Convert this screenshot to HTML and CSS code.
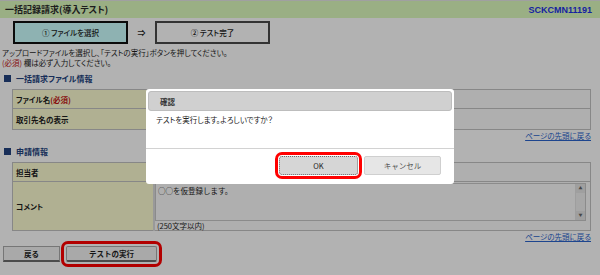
FILE: index.html
```html
<!DOCTYPE html>
<html lang="ja">
<head>
    <meta charset="UTF-8">
    <title>一括記録請求(導入テスト)</title>
    <link rel="stylesheet" href="styles.css">
</head>
<body>
    <div class="page">
        <!-- Title bar -->
        <div class="titlebar">
            <h1>一括記録請求(導入テスト)</h1>
            <span class="screen-id">SCKCMN11191</span>
        </div>

        <!-- Steps -->
        <div class="steps">
            <div class="step current">① ファイルを選択</div>
            <span class="arrow">⇒</span>
            <div class="step">② テスト完了</div>
        </div>

        <p class="guide">
            アップロードファイルを選択し、「テストの実行」ボタンを押してください。<br>
            <span class="req">(必須)</span> 欄は必ず入力してください。
        </p>

        <h2 class="section">一括請求ファイル情報</h2>
        <table class="form-table">
            <tr class="row-file">
                <th>ファイル名<span class="req">(必須)</span></th>
                <td></td>
            </tr>
            <tr class="row-name">
                <th>取引先名の表示</th>
                <td></td>
            </tr>
        </table>
        <div class="to-top"><a href="#">ページの先頭に戻る</a></div>

        <h2 class="section">申請情報</h2>
        <table class="form-table">
            <tr class="row-user">
                <th>担当者</th>
                <td></td>
            </tr>
            <tr class="row-comment">
                <th>コメント</th>
                <td>
                    <div class="comment-box">
                        <textarea class="comment">○○を仮登録します。</textarea>
                        <div class="scrollbar">
                            <span class="scroll-arrow">▲</span>
                            <span class="scroll-arrow">▼</span>
                        </div>
                    </div>
                    <div class="note">(250文字以内)</div>
                </td>
            </tr>
        </table>
        <div class="to-top"><a href="#">ページの先頭に戻る</a></div>

        <div class="actions">
            <button class="btn back">戻る</button>
            <button class="btn run">テストの実行</button>
        </div>
    </div>

    <!-- Confirm dialog -->
    <div class="overlay"></div>
    <div class="dialog">
        <div class="dialog-title">確認</div>
        <div class="dialog-body">テストを実行します。よろしいですか？</div>
        <div class="dialog-buttons">
            <button class="dlg-btn ok">OK</button>
            <button class="dlg-btn cancel">キャンセル</button>
        </div>
    </div>
</body>
</html>
```

FILE: styles.css
```css
body {
    margin: 0;
    font-family: "Noto Sans CJK JP", sans-serif;
    font-size: 7.5px;
    font-feature-settings: "palt";
    color: #1e1e1e;
    background-color: #fff;
}
.page {
    width: 600px;
    height: 275px;
    overflow: hidden;
}

/* Title bar */
.titlebar {
    display: flex;
    justify-content: space-between;
    align-items: center;
    height: 17px;
    border-top: 1px solid #e6e6e6;
    padding: 0 8px 0 5px;
    background-color: #ddfbbd;
}
h1 {
    margin: 0;
    font-size: 9px;
    font-weight: bold;
    color: #2a2a2a;
}
.screen-id {
    font-family: "Liberation Sans", Arial, sans-serif;
    font-size: 9px;
    font-weight: bold;
    color: #1f32e6;
}

/* Steps */
.steps {
    display: flex;
    align-items: center;
    margin: 3px 0 0 13px;
}
.step {
    width: 111px;
    height: 19px;
    border: 2px solid #4a4a4a;
    background-color: #fff;
    display: flex;
    align-items: center;
    justify-content: center;
    font-size: 7.5px;
    font-weight: 500;
}
.step.current {
    border-color: #111;
    background-color: #ccffff;
}
.arrow {
    width: 27px;
    text-align: center;
    font-size: 8px;
    font-weight: bold;
}

.guide {
    margin: 4px 0 0 2px;
    line-height: 10px;
}
.req {
    color: #c21414;
}

/* Section headers */
.section {
    display: flex;
    align-items: center;
    gap: 5px;
    height: 11px;
    margin: 5px 0 0 4px;
    font-size: 8px;
    font-weight: bold;
    color: #23437e;
}
.section::before {
    content: "";
    width: 7px;
    height: 7px;
    background-color: #23437e;
}

/* Form tables */
.form-table {
    width: 579px;
    margin: 5px 0 0 12px;
    border-collapse: collapse;
}
.form-table th,
.form-table td {
    border: 1px solid #c2c2c2;
    padding: 0;
}
.form-table th {
    width: 137px;
    padding-left: 3px;
    text-align: left;
    font-weight: bold;
    background-color: #fdfdd2;
    border-right: 2px solid #dcdcdc;
}
.form-table td {
    background-color: #fbfbfb;
}
.row-file { height: 19px; }
.row-name { height: 21px; }
.row-user { height: 19px; }
.row-comment { height: 49px; }
.row-comment td {
    vertical-align: top;
    padding-top: 1px;
}
.comment-box {
    display: flex;
    width: 431px;
    height: 38px;
    box-sizing: border-box;
    border: 1px solid #c8c8c8;
    background-color: #fbfbfb;
}
.comment {
    flex: 1;
    margin: 0;
    padding: 1px 2px;
    border: none;
    resize: none;
    overflow: hidden;
    font-family: inherit;
    font-size: 7.5px;
    color: #1e1e1e;
    background-color: transparent;
}
.scrollbar {
    width: 9px;
    display: flex;
    flex-direction: column;
    justify-content: space-between;
    background-color: #f0f0f0;
    border-left: 1px solid #e2e2e2;
}
.scroll-arrow {
    height: 9px;
    font-size: 4px;
    line-height: 9px;
    text-align: center;
    color: #666;
    background-color: #e4e4e4;
}
.note {
    margin: 0 0 0 2px;
    line-height: 9px;
}

.to-top {
    width: 591px;
    height: 10px;
    margin-top: 1px;
    text-align: right;
    line-height: 10px;
}
.to-top a {
    color: #2a63cc;
}

/* Bottom buttons */
.actions {
    display: flex;
    gap: 6px;
    margin: 4px 0 0 3px;
}
.btn {
    height: 16px;
    padding: 0;
    font-family: inherit;
    font-size: 7.5px;
    font-weight: bold;
    color: #1e1e1e;
    background-color: #f2f2f2;
    border: 1px solid #aaa;
    border-bottom: 2px solid #6e6e6e;
}
.btn.back { width: 57px; }
.btn.run {
    width: 91px;
    outline: 3px solid #f00;
    outline-offset: 2px;
    border-radius: 2px;
}

/* Dialog */
.overlay {
    position: fixed;
    inset: 0;
    background-color: rgba(0, 0, 0, 0.3);
}
.dialog {
    position: absolute;
    left: 146px;
    top: 89px;
    width: 308px;
    height: 95px;
    box-sizing: border-box;
    padding: 2px 2px 0;
    background-color: #fff;
    border-radius: 3px;
    display: flex;
    flex-direction: column;
}
.dialog-title {
    height: 18px;
    padding-left: 11px;
    display: flex;
    align-items: center;
    font-weight: bold;
    color: #333;
    background-color: #d0d0d0;
    border: 1px solid #bdbdbd;
    border-radius: 3px;
}
.dialog-body {
    flex: 1;
    padding: 4px 8px 0;
    line-height: 10px;
    color: #222;
}
.dialog-buttons {
    height: 36px;
    box-sizing: border-box;
    margin: 0 -2px;
    padding: 7px 13px 0 0;
    border-top: 1px solid #d2d2d2;
    display: flex;
    justify-content: flex-end;
    align-items: flex-start;
    gap: 6px;
}
.dlg-btn {
    height: 19px;
    padding: 0;
    font-family: inherit;
    font-size: 7.5px;
    border-radius: 2px;
}
.dlg-btn.ok {
    width: 79px;
    color: #222;
    background-color: #d6d6d6;
    border: 1px dotted #6a6a6a;
    outline: 3px solid #f00;
    outline-offset: 1px;
    border-radius: 3px;
}
.dlg-btn.cancel {
    width: 77px;
    color: #555;
    background-color: #e6e6e6;
    border: 1px solid #cfcfcf;
}
```
